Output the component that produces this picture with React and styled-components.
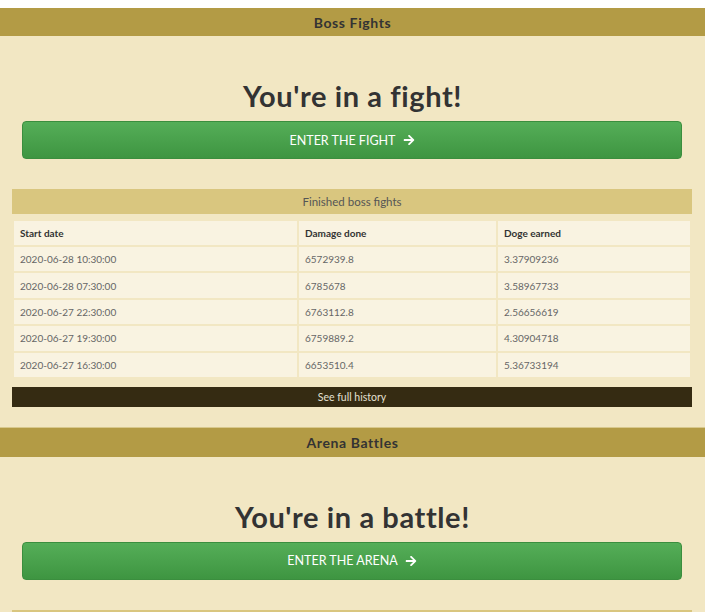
import React from "react";
import styled, { createGlobalStyle } from "styled-components";
import { FaArrowRight } from "react-icons/fa";

const Global = createGlobalStyle`
  html, body { margin: 0; padding: 0; background: #ffffff; }
  body { font-family: "Lato", "Open Sans", sans-serif; }
`;

const Page = styled.div`
  width: 705px;
  padding-top: 8px;
  min-height: 604px;
  background: linear-gradient(#ffffff, #ffffff) top / 100% 8px no-repeat, #f2e7c3;
`;

const SectionHeader = styled.div`
  height: ${(p) => (p.$divider ? 29 : 28)}px;
  background: #b39b45;
  border-top: ${(p) => (p.$divider ? "1px solid #d8c88c" : "none")};
  display: flex;
  align-items: center;
  justify-content: center;
  font-family: "Lato", sans-serif;
  font-weight: 700;
  font-size: 14px;
  letter-spacing: 0.6px;
  color: #333;
`;

const SectionBody = styled.div`
  padding: 43px 12px 0 12px;
`;

const Title = styled.h1`
  margin: 0 0 8px 0;
  line-height: 34px;
  text-align: center;
  font-family: "Lato", sans-serif;
  font-weight: 700;
  font-size: 29px;
  letter-spacing: 0.6px;
  color: #333;
`;

const EnterButton = styled.button`
  display: flex;
  align-items: center;
  justify-content: center;
  gap: 7px;
  width: calc(100% - 21px);
  margin: 0 11px 0 10px;
  height: 38px;
  border: 1px solid #3b8e3e;
  border-radius: 4px;
  background: linear-gradient(#55ae58, #3e9541);
  color: #fff;
  font-family: "Lato", sans-serif;
  font-size: 12.5px;
  cursor: pointer;
  svg { width: 12px; height: 12px; }
`;

const HistoryBlock = styled.div`
  margin-top: 30px;
  width: 680px;
`;

const HistoryTitle = styled.div`
  height: 25px;
  background: #d9c67f;
  display: flex;
  align-items: center;
  justify-content: center;
  font-family: "Lato", sans-serif;
  font-size: 11.5px;
  color: #555;
`;

const Table = styled.table`
  margin-top: 5px;
  width: 680px;
  border-collapse: separate;
  border-spacing: 2px;
  table-layout: fixed;
  font-family: "Lato", sans-serif;
  font-size: 10px;
`;

const Th = styled.th`
  background: #f9f3e1;
  height: 24px;
  padding: 0 6px;
  text-align: left;
  font-weight: 700;
  color: #333;
`;

const Td = styled.td`
  background: #f9f3e1;
  height: 24.4px;
  padding: 0 6px;
  color: #666;
`;

const HistoryLink = styled.a`
  display: flex;
  align-items: center;
  justify-content: center;
  margin-top: 8px;
  height: 20px;
  background: #352b12;
  color: #e4e0d2;
  font-family: "Lato", sans-serif;
  font-size: 10.5px;
  text-decoration: none;
`;

const Spacer = styled.div`
  height: ${(p) => p.$h}px;
`;

const fights = [
  ["2020-06-28 10:30:00", "6572939.8", "3.37909236"],
  ["2020-06-28 07:30:00", "6785678", "3.58967733"],
  ["2020-06-27 22:30:00", "6763112.8", "2.56656619"],
  ["2020-06-27 19:30:00", "6759889.2", "4.30904718"],
  ["2020-06-27 16:30:00", "6653510.4", "5.36733194"],
];

function History({ title, cols, rows }) {
  return (
    <HistoryBlock>
      <HistoryTitle>{title}</HistoryTitle>
      <Table>
        <colgroup>
          <col style={{ width: "283px" }} />
          <col style={{ width: "197px" }} />
          <col style={{ width: "192px" }} />
        </colgroup>
        <thead>
          <tr>
            {cols.map((c) => (
              <Th key={c}>{c}</Th>
            ))}
          </tr>
        </thead>
        <tbody>
          {rows.map((r, i) => (
            <tr key={i}>
              {r.map((v, j) => (
                <Td key={j}>{v}</Td>
              ))}
            </tr>
          ))}
        </tbody>
      </Table>
      <HistoryLink href="#">See full history</HistoryLink>
    </HistoryBlock>
  );
}

export default function App() {
  return (
    <>
      <Global />
      <Page>
        <SectionHeader>Boss Fights</SectionHeader>
        <SectionBody>
          <Title>You're in a fight!</Title>
          <EnterButton>
            ENTER THE FIGHT <FaArrowRight />
          </EnterButton>
          <History
            title="Finished boss fights"
            cols={["Start date", "Damage done", "Doge earned"]}
            rows={fights}
          />
        </SectionBody>
        <Spacer $h={20} />
        <SectionHeader $divider>Arena Battles</SectionHeader>
        <SectionBody>
          <Title>You're in a battle!</Title>
          <EnterButton>
            ENTER THE ARENA <FaArrowRight />
          </EnterButton>
          <History
            title="Finished arena battles"
            cols={["Start date", "Opponent", "Doge earned"]}
            rows={fights}
          />
        </SectionBody>
      </Page>
    </>
  );
}
